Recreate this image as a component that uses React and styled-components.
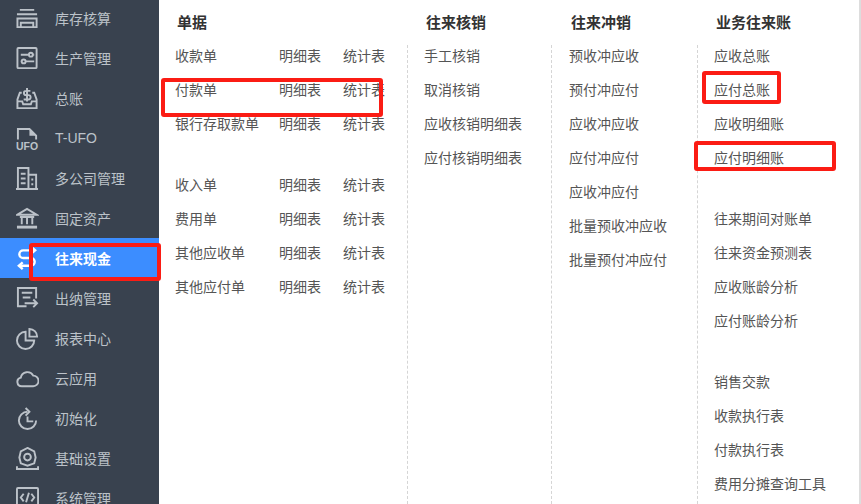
import React from 'react';
import styled, { createGlobalStyle } from 'styled-components';

const GlobalStyle = createGlobalStyle`
  html, body {
    margin: 0;
    padding: 0;
    height: 100%;
    overflow: hidden;
    background: #fff;
    font-family: "Liberation Sans", "Noto Sans CJK SC", sans-serif;
  }
`;

const stroke = {
  fill: 'none',
  stroke: 'currentColor',
  strokeWidth: 2,
};

const icons = {
  stock: (
    <g {...stroke}>
      <path d="M4 3h15M1 7.500h21" />
      <path d="M1.500 12h20v9h-20z" />
      <path d="M5 21v-4.500h13V21" />
    </g>
  ),
  production: (
    <g {...stroke}>
      <rect x="1.500" y="1" width="20" height="21" rx="1" />
      <path d="M5 8h8M18 8h1M5 15h1M10 15h9" />
      <circle cx="15.500" cy="8" r="2" />
      <circle cx="8" cy="15" r="2" />
    </g>
  ),
  ledger: (
    <g {...stroke}>
      <path d="M6 6H4L1.500 13v9h20v-9L19 6h-2" />
      <path d="M1.500 15h5l1 3h8l1-3h5" />
      <path d="M15 4h-4.500a1.800 1.800 0 0 0 0 4.500h2.500a1.800 1.800 0 0 1 0 4.500H8M11.500 1v14" />
    </g>
  ),
  ufo: (
    <g>
      <path {...stroke} d="M2 13V2h12l7 7v4" />
      <path fill="currentColor" d="M14 1l8 8h-8z" />
      <text
        x="0"
        y="23.500"
        fontSize="11"
        fontWeight="700"
        fontFamily="Liberation Sans"
        textLength="23"
        lengthAdjust="spacingAndGlyphs"
        fill="currentColor"
      >
        UFO
      </text>
    </g>
  ),
  company: (
    <g {...stroke}>
      <path d="M0 23h23M2 23V1h11v22M13 8h8v15" />
      <path d="M5 7h5M5 12h5M5 17h5M16 13h2M16 18h2" />
    </g>
  ),
  asset: (
    <g {...stroke}>
      <path d="M1.500 8L11.500 2l10 6z" />
      <path d="M6 11v7M11.500 11v7M17 11v7M4 10.500h15" />
      <path d="M1 21h21" strokeWidth="3" />
    </g>
  ),
  transfer: (
    <g {...stroke} strokeWidth="2.500">
      <path d="M16 0l4 3.500-4 3.500M20 3.500H7.500a4 4 0 0 0 0 8h8a4 4 0 0 1 0 8H3" />
      <path d="M7 16l-4 3.500 4 3.500" />
    </g>
  ),
  cashier: (
    <g {...stroke}>
      <path d="M21 12V1H2v19h9" />
      <path d="M6 6h11M7 11h8" />
      <path d="M9 17h13M18 13l4 4-4 4" />
    </g>
  ),
  report: (
    <g {...stroke}>
      <path d="M10 5a9 9 0 1 0 9 9h-9z" />
      <path d="M14 2a8 8 0 0 1 8 8h-8z" />
    </g>
  ),
  cloud: (
    <g {...stroke}>
      <path d="M6 20a4.500 4.500 0 0 1-1-8.900A7 7 0 0 1 18 9a5.500 5.500 0 0 1 0 11z" />
    </g>
  ),
  init: (
    <g {...stroke}>
      <path d="M12 5a9 9 0 1 0 9 9" />
      <path d="M10 1l4 4-4 4" />
      <path d="M12 10v5h6" />
    </g>
  ),
  settings: (
    <g {...stroke}>
      <path d="M12 1l7 3.500 1.500 6.500-1.500 6-7 2.500-7-2.500-1.500-6L5 4.500z" />
      <circle cx="12" cy="10.500" r="3.500" />
      <path d="M1 20v3h22v-3" />
    </g>
  ),
  system: (
    <g {...stroke}>
      <rect x="1" y="1" width="22" height="20" rx="1" />
      <path d="M8 7l-3 4 3 4M16 7l3 4-3 4M13.500 6l-3 10" />
    </g>
  ),
};

const menuItems = [
  { key: 'stock', label: '库存核算' },
  { key: 'production', label: '生产管理' },
  { key: 'ledger', label: '总账' },
  { key: 'ufo', label: 'T-UFO' },
  { key: 'company', label: '多公司管理' },
  { key: 'asset', label: '固定资产' },
  { key: 'transfer', label: '往来现金', active: true },
  { key: 'cashier', label: '出纳管理' },
  { key: 'report', label: '报表中心' },
  { key: 'cloud', label: '云应用' },
  { key: 'init', label: '初始化' },
  { key: 'settings', label: '基础设置' },
  { key: 'system', label: '系统管理' },
];

const billGroups = [
  ['收款单', '付款单', '银行存取款单'],
  ['收入单', '费用单', '其他应收单', '其他应付单'],
];

const columns = [
  {
    title: '往来核销',
    width: 145,
    gutter: 17,
    groups: [['手工核销', '取消核销', '应收核销明细表', '应付核销明细表']],
  },
  {
    title: '往来冲销',
    width: 145,
    gutter: 18,
    groups: [['预收冲应收', '预付冲应付', '应收冲应收', '应付冲应付', '应收冲应付', '批量预收冲应收', '批量预付冲应付']],
  },
  {
    title: '业务往来账',
    gutter: 17,
    groups: [
      ['应收总账', '应付总账', '应收明细账', '应付明细账'],
      ['往来期间对账单', '往来资金预测表', '应收账龄分析', '应付账龄分析'],
      ['销售交款', '收款执行表', '付款执行表', '费用分摊查询工具'],
    ],
  },
];

const marks = [
  { left: 29, top: 243, width: 132, height: 38 },
  { left: 161, top: 78, width: 222, height: 39 },
  { left: 702, top: 71, width: 79, height: 33 },
  { left: 694, top: 141, width: 142, height: 30 },
];

export default function App() {
  return (
    <Page>
      <GlobalStyle />
      <Sidebar>
        {menuItems.map((item) => (
          <MenuItem key={item.key} $active={item.active}>
            <MenuIcon viewBox="0 0 24 24">{icons[item.key]}</MenuIcon>
            {item.label}
          </MenuItem>
        ))}
      </Sidebar>
      <Panel>
        <Column $width={249}>
          <Title>单据</Title>
          <div>
            {billGroups.map((group) => (
              <Group key={group[0]}>
                {group.map((name) => (
                  <BillRow key={name}>
                    <BillName>{name}</BillName>
                    <BillLink>明细表</BillLink>
                    <span>统计表</span>
                  </BillRow>
                ))}
              </Group>
            ))}
          </div>
        </Column>
        {columns.map((column) => (
          <Column key={column.title} $width={column.width}>
            <Title>{column.title}</Title>
            <List $gutter={column.gutter}>
              {column.groups.map((group) => (
                <Group key={group[0]}>
                  {group.map((name) => (
                    <LinkRow key={name}>{name}</LinkRow>
                  ))}
                </Group>
              ))}
            </List>
          </Column>
        ))}
      </Panel>
      {marks.map((mark) => (
        <RedMark key={mark.left} style={mark} />
      ))}
    </Page>
  );
}

const Page = styled.div`
  position: relative;
  display: flex;
  width: 861px;
  height: 504px;
  overflow: hidden;
  background: #fff;
`;

const Sidebar = styled.nav`
  flex: 0 0 159px;
  height: 506px;
  margin-top: -2px;
  background: #39424f;
`;

const MenuItem = styled.div`
  display: flex;
  align-items: center;
  height: 40px;
  padding-left: 16px;
  font-size: 14px;
  font-weight: ${(p) => (p.$active ? 700 : 400)};
  color: ${(p) => (p.$active ? '#fff' : '#bcc2c9')};
  background: ${(p) => (p.$active ? '#3c8dff' : 'transparent')};
`;

const MenuIcon = styled.svg`
  flex: 0 0 23px;
  width: 23px;
  height: 23px;
  margin-right: 16px;
`;

const Panel = styled.main`
  display: flex;
  flex: 1;
  padding-left: 16px;
  border-right: 2px solid #ddd;
`;

const Column = styled.section`
  display: flex;
  flex-direction: column;
  flex: ${(p) => (p.$width ? `0 0 ${p.$width}px` : '1')};
`;

const Title = styled.h3`
  height: 45px;
  margin: 0;
  padding-left: 2px;
  font-size: 15px;
  font-weight: 700;
  line-height: 46px;
  color: #333;
`;

const List = styled.div`
  flex: 1;
  margin-left: ${(p) => -p.$gutter}px;
  padding-left: ${(p) => p.$gutter - 1}px;
  border-left: 1px dashed #d5d5d5;
`;

const Group = styled.div`
  padding-bottom: 27px;
`;

const LinkRow = styled.div`
  height: 22px;
  margin-bottom: 12px;
  font-size: 14px;
  line-height: 22px;
  white-space: nowrap;
  color: #555;
`;

const BillRow = styled(LinkRow)`
  display: flex;
`;

const BillName = styled.span`
  width: 104px;
`;

const BillLink = styled.span`
  width: 64px;
`;

const RedMark = styled.div`
  position: absolute;
  box-sizing: border-box;
  border: 4px solid #fb1c14;
  border-radius: 3px;
`;
